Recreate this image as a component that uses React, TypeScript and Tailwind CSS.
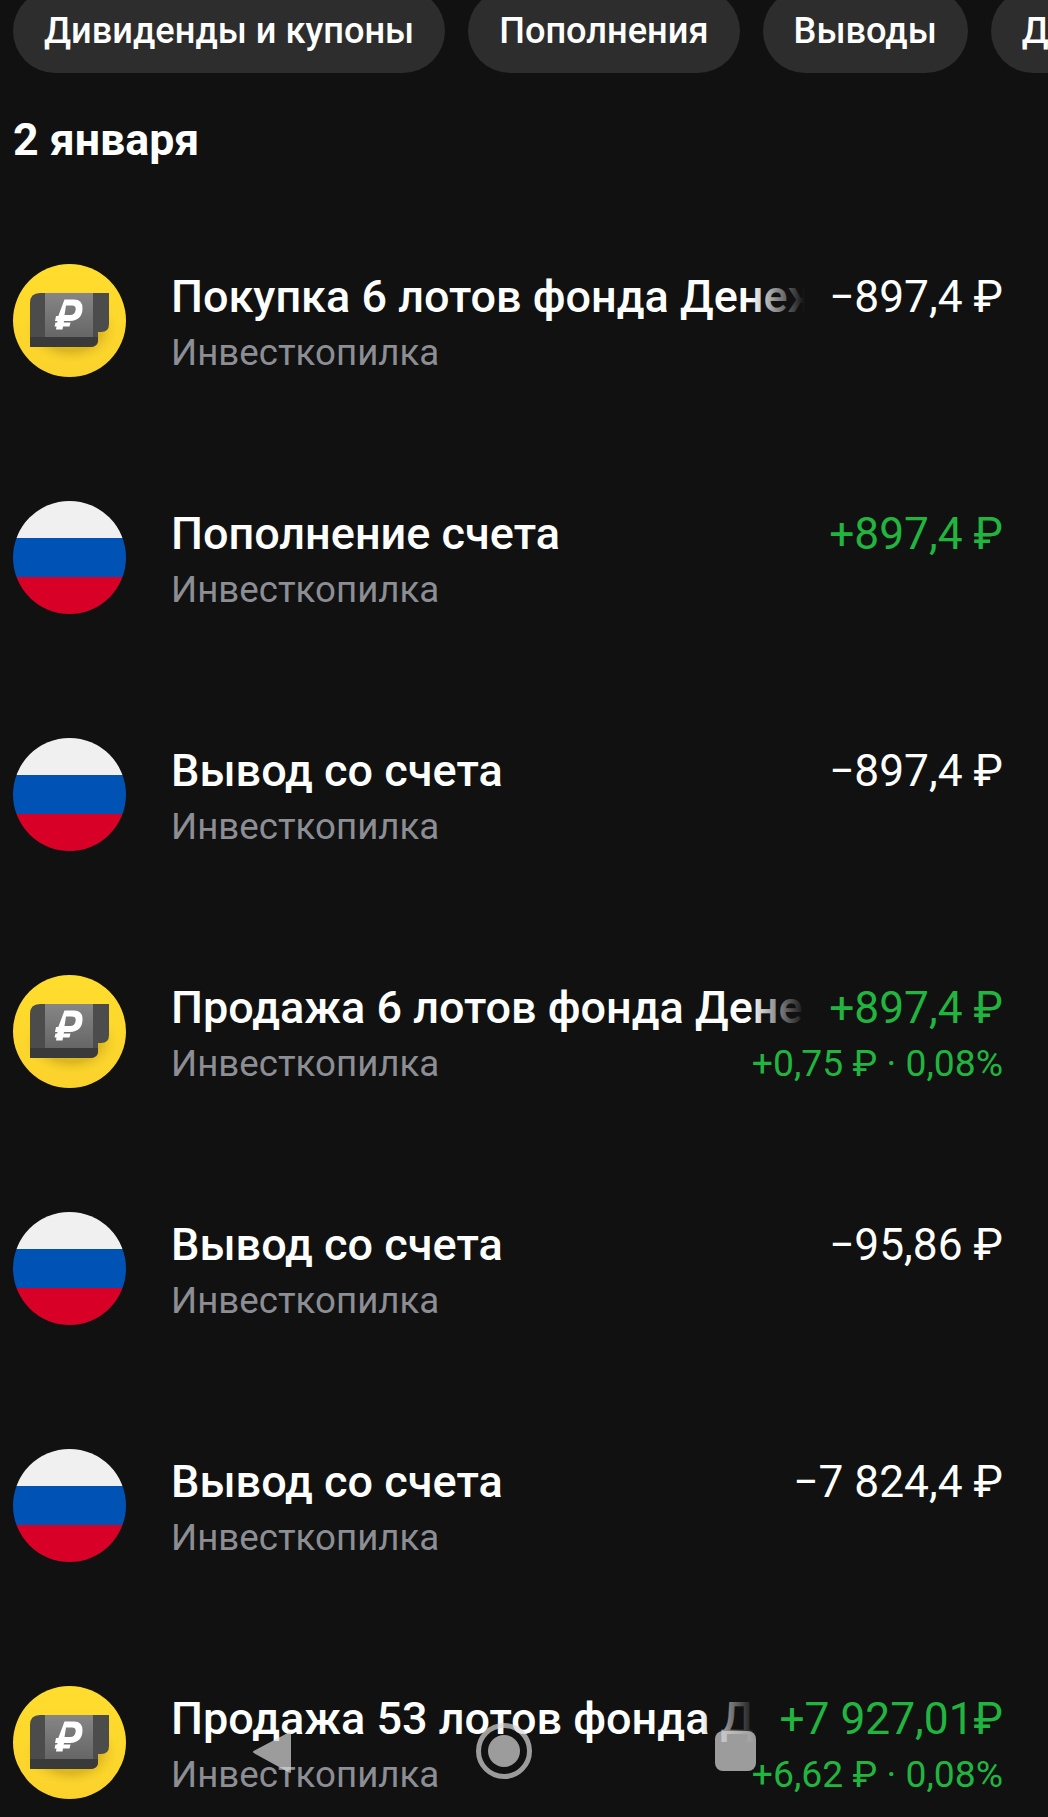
const chips = ['Дивиденды и купоны', 'Пополнения', 'Выводы', 'Другие'];

type Op = {
  kind: 'fund' | 'flag';
  title: string;
  amount: string;
  income?: boolean;
  extra?: string;
};

const ops: Op[] = [
  { kind: 'fund', title: 'Покупка 6 лотов фонда Денежный рынок', amount: '−897,4 ₽' },
  { kind: 'flag', title: 'Пополнение счета', amount: '+897,4 ₽', income: true },
  { kind: 'flag', title: 'Вывод со счета', amount: '−897,4 ₽' },
  { kind: 'fund', title: 'Продажа 6 лотов фонда Денежный рынок', amount: '+897,4 ₽', income: true, extra: '+0,75 ₽ · 0,08%' },
  { kind: 'flag', title: 'Вывод со счета', amount: '−95,86 ₽' },
  { kind: 'flag', title: 'Вывод со счета', amount: '−7 824,4 ₽' },
  { kind: 'fund', title: 'Продажа 53 лотов фонда Денежный рынок', amount: '+7 927,01₽', income: true, extra: '+6,62 ₽ · 0,08%' },
];

function FlagIcon() {
  return (
    <div className="w-[113px] h-[113px] shrink-0 rounded-full overflow-hidden flex flex-col">
      <div className="h-[37px] bg-[#f0f0f0]" />
      <div className="h-[39px] bg-[#0052b4]" />
      <div className="h-[37px] bg-[#d80027]" />
    </div>
  );
}

function FundIcon() {
  return (
    <div className="w-[113px] h-[113px] shrink-0 rounded-full bg-gradient-to-b from-[#ffdd2d] to-[#fbd22c]">
      <svg width="113" height="113" viewBox="0 0 113 113">
        <defs>
          <radialGradient id="shade" cx="0.5" cy="0.55" r="0.5">
            <stop offset="0.6" stopColor="#b08c10" stopOpacity="0.4" />
            <stop offset="1" stopColor="#ffdd2d" stopOpacity="0" />
          </radialGradient>
          <linearGradient id="face" x1="0" y1="0" x2="0" y2="1">
            <stop offset="0" stopColor="#868686" />
            <stop offset="1" stopColor="#666666" />
          </linearGradient>
        </defs>
        <ellipse cx="58" cy="62" rx="50" ry="36" fill="url(#shade)" />
        <path d="M17 83V39Q17 29 27 29H96V60Q96 68 88 68H85V76Q85 83 77 83Z" fill="#4c4c4c" />
        <path d="M17 73H85V76Q85 83 77 83H17Z" fill="#3a3a3a" />
        <rect x="32" y="29" width="48" height="44" fill="url(#face)" />
        {/* ruble mark of the logo */}
        <path
          fill="#fff"
          fillRule="evenodd"
          d="M51.500 35.500H61Q70 35.500 69.500 45Q69 56.500 57 57H51L50.700 58.500H57.500L56.500 62.500H50L49.500 65.500H43L43.500 62.500H41.500L42.500 58.500H44.200L44.500 57H42L43 52H45.300ZM53 41.500H59Q63 41.500 62.700 45.500Q62 51 57 51H51.500Z"
        />
      </svg>
    </div>
  );
}

function Row({ op }: { op: Op }) {
  const color = op.income ? 'text-[#21b53f]' : 'text-white';
  return (
    <div className="h-[237px] flex items-center pl-[13px] pr-[45px]">
      {op.kind === 'fund' ? <FundIcon /> : <FlagIcon />}
      <div className="ml-[45px] flex-1 min-w-0 pt-[9px]">
        <div className="flex gap-[24px] h-[55px] items-start">
          <div className="relative flex-1 min-w-0 overflow-hidden whitespace-nowrap text-[45px] leading-[53px] font-medium text-white">
            {op.title}
            <div className="absolute right-0 top-0 bottom-0 w-[55px] bg-gradient-to-r from-[#11111100] to-[#111111]" />
          </div>
          <div className={`shrink-0 text-[44.3px] leading-[55px] whitespace-nowrap ${color}`}>{op.amount}</div>
        </div>
        <div className="flex justify-between h-[55px] items-center">
          <div className="text-[36.7px] leading-[55px] text-[#8c8e94]">Инвесткопилка</div>
          {op.extra && <div className="text-[37.3px] leading-[55px] whitespace-nowrap text-[#21b53f]">{op.extra}</div>}
        </div>
      </div>
    </div>
  );
}

export default function App() {
  return (
    <main className="relative w-[1048px] h-[1817px] overflow-hidden bg-[#111111] font-['Roboto',sans-serif]">
      {/* Filter chips, top cut off by the screenshot */}
      <div className="h-[73px] flex items-end gap-[23px] pl-[13px] overflow-hidden">
        {chips.map((c) => (
          <div
            key={c}
            className="h-[84px] shrink-0 flex items-center px-[31px] rounded-full bg-[#2d2d2d] text-[36.2px] font-medium text-white whitespace-nowrap"
          >
            {c}
          </div>
        ))}
      </div>

      <h2 className="mt-[42px] pl-[13px] text-[44.7px] leading-[50px] font-bold text-white">2 января</h2>

      <div className="mt-[37px]">
        {ops.map((op, i) => (
          <Row key={i} op={op} />
        ))}
      </div>

      {/* Android nav buttons on top of the list */}
      <div className="absolute left-[252px] top-[1723px] flex items-center opacity-70">
        <svg width="39" height="55" viewBox="0 0 39 55" className="mr-[185px]">
          <path d="M38 9V48L2 28Z" fill="#d8d8d8" stroke="#d8d8d8" strokeWidth="2" strokeLinejoin="round" />
        </svg>
        <div className="w-[56px] h-[56px] rounded-full border-[5px] border-[#d8d8d8] flex items-center justify-center mr-[183px]">
          <div className="w-[32px] h-[32px] rounded-full bg-[#d8d8d8]" />
        </div>
        <div className="w-[41px] h-[40px] rounded-[8px] bg-[#d8d8d8]" />
      </div>
    </main>
  );
}
